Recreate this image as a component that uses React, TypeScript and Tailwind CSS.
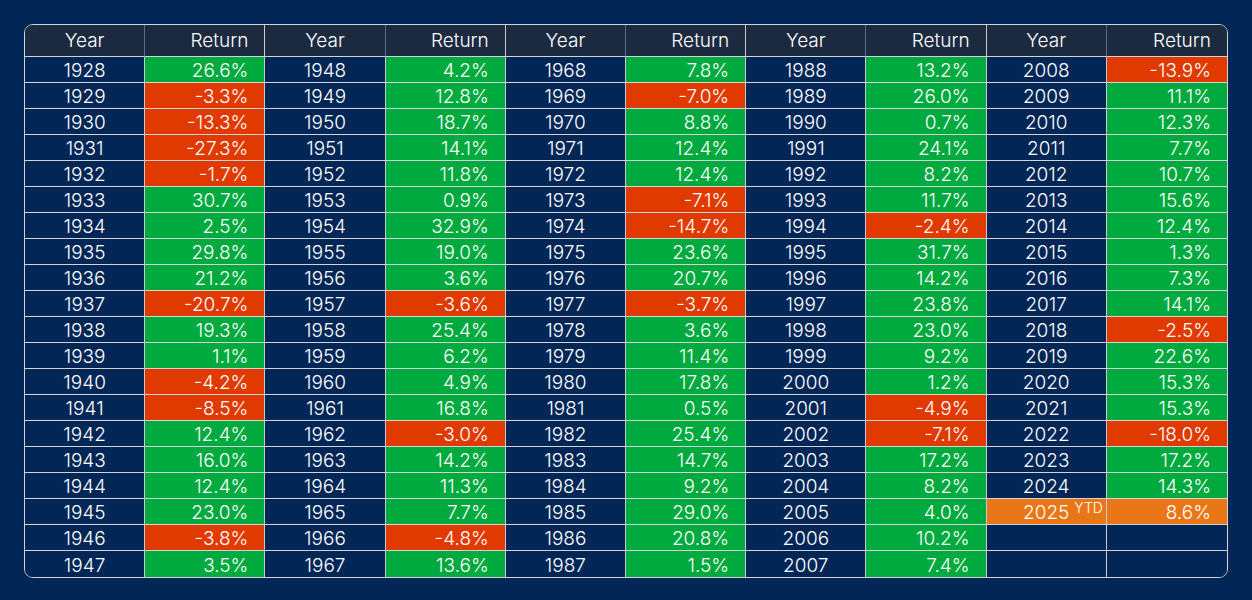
import React from "react";

type Cell = { year: string; ret: number | null; ytd?: boolean };

const cols: [number, number[]][] = [
  [1928, [26.6, -3.3, -13.3, -27.3, -1.7, 30.7, 2.5, 29.8, 21.2, -20.7, 19.3, 1.1, -4.2, -8.5, 12.4, 16.0, 12.4, 23.0, -3.8, 3.5]],
  [1948, [4.2, 12.8, 18.7, 14.1, 11.8, 0.9, 32.9, 19.0, 3.6, -3.6, 25.4, 6.2, 4.9, 16.8, -3.0, 14.2, 11.3, 7.7, -4.8, 13.6]],
  [1968, [7.8, -7.0, 8.8, 12.4, 12.4, -7.1, -14.7, 23.6, 20.7, -3.7, 3.6, 11.4, 17.8, 0.5, 25.4, 14.7, 9.2, 29.0, 20.8, 1.5]],
  [1988, [13.2, 26.0, 0.7, 24.1, 8.2, 11.7, -2.4, 31.7, 14.2, 23.8, 23.0, 9.2, 1.2, -4.9, -7.1, 17.2, 8.2, 4.0, 10.2, 7.4]],
  [2008, [-13.9, 11.1, 12.3, 7.7, 10.7, 15.6, 12.4, 1.3, 7.3, 14.1, -2.5, 22.6, 15.3, 15.3, -18.0, 17.2, 14.3, 8.6]],
];

function buildColumn(start: number, vals: number[]): Cell[] {
  const out: Cell[] = [];
  for (let i = 0; i < 20; i++) {
    if (i < vals.length) {
      out.push({ year: String(start + i), ret: vals[i], ytd: start + i === 2025 });
    } else {
      out.push({ year: "", ret: null });
    }
  }
  return out;
}

const data = cols.map(([s, v]) => buildColumn(s, v));

export default function App() {
  return (
    <div
      className="min-h-[600px] w-full bg-[#022656] p-6"
      style={{ fontFamily: "Inter, 'Open Sans', sans-serif" }}
    >
      <div className="grid grid-cols-10 overflow-hidden rounded-[9px] border border-[#d2d4d8] text-white text-[19px] font-light">
        {data.map((_, ci) => (
          <React.Fragment key={"h" + ci}>
            <div className="flex h-[32px] items-center justify-center border-b border-r border-b-[#d2d4d8] border-r-[#5a6c88] bg-[#1c2a40] pt-[2px]">
              Year
            </div>
            <div
              className={
                "flex h-[32px] items-center justify-end border-b border-b-[#d2d4d8] bg-[#1c2a40] pr-4 pt-[2px] " +
                (ci < 4 ? "border-r border-r-[#c8ccd2]" : "")
              }
            >
              Return
            </div>
          </React.Fragment>
        ))}
        {Array.from({ length: 20 }).map((_, ri) =>
          data.map((col, ci) => {
            const c = col[ri];
            const last = ri === 19;
            const bg =
              c.ret === null
                ? "bg-[#022656]"
                : c.ytd
                ? "bg-[#e97718]"
                : c.ret < 0
                ? "bg-[#e03a00]"
                : "bg-[#00aa3e]";
            return (
              <React.Fragment key={ri + "-" + ci}>
                <div
                  className={
                    "relative flex h-[26px] items-center justify-center border-r border-r-[#c8ccd2] pt-[2px] " +
                    (last ? "" : "border-b border-b-[#d2d4d8] ") +
                    (c.ytd ? "bg-[#e97718]" : "bg-[#022656]")
                  }
                >
                  <span className="relative leading-none">
                    {c.year}
                    {c.ytd && (
                      <span className="absolute left-full top-[-2px] ml-[5px] text-[14px] leading-none">
                        YTD
                      </span>
                    )}
                  </span>
                </div>
                <div
                  className={
                    "flex h-[26px] items-center justify-end pr-4 pt-[2px] " +
                    (ci < 4 ? "border-r border-r-[#c8ccd2] " : "") +
                    (last ? "" : "border-b border-b-[#d2d4d8] ") +
                    bg
                  }
                >
                  <span className="leading-none">
                    {c.ret === null ? "" : c.ret.toFixed(1) + "%"}
                  </span>
                </div>
              </React.Fragment>
            );
          })
        )}
      </div>
    </div>
  );
}
